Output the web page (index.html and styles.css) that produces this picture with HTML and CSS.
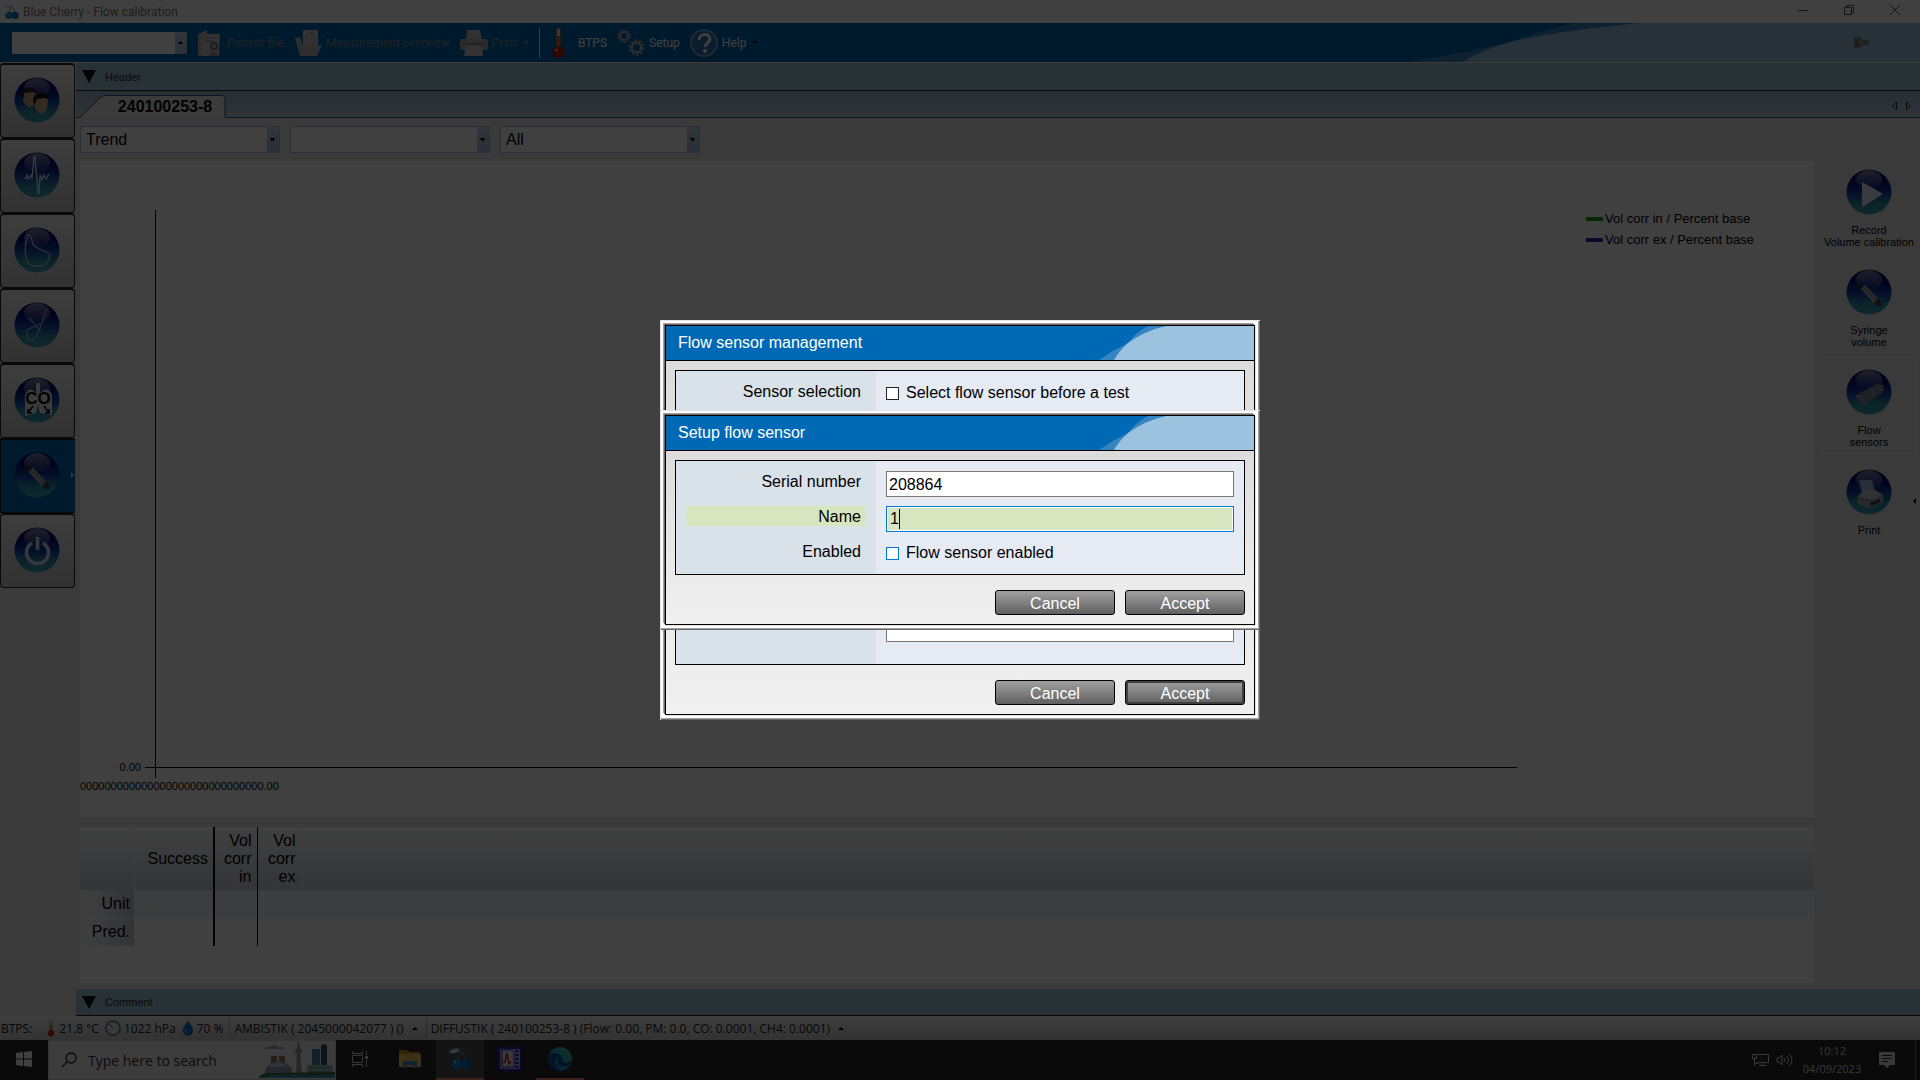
FILE: index.html
```html
<!DOCTYPE html>
<html lang="en">
<head>
    <meta charset="UTF-8">
    <meta name="viewport" content="width=device-width, initial-scale=1.0">
    <title>Blue Cherry - Flow calibration</title>
    <link rel="stylesheet" href="styles.css">
</head>
<body>

<!-- Shared shapes -->
<svg class="defs" aria-hidden="true">
    <defs>
        <linearGradient id="orbFill" x1="0" y1="0" x2="0" y2="1">
            <stop offset="0" stop-color="#000050"/>
            <stop offset="0.3" stop-color="#06107c"/>
            <stop offset="0.58" stop-color="#1850a8"/>
            <stop offset="0.75" stop-color="#2c8ca4"/>
            <stop offset="1" stop-color="#38a0b8"/>
        </linearGradient>
        <linearGradient id="orbShine" x1="0" y1="0" x2="0" y2="1">
            <stop offset="0" stop-color="#fff" stop-opacity="0.5"/>
            <stop offset="1" stop-color="#fff" stop-opacity="0.02"/>
        </linearGradient>
        <linearGradient id="edgeFill" x1="0" y1="1" x2="1" y2="0">
            <stop offset="0" stop-color="#0c59a4"/>
            <stop offset="0.5" stop-color="#1b9de2"/>
            <stop offset="1" stop-color="#5fd45a"/>
        </linearGradient>
        <symbol id="orb" viewBox="0 0 46 46">
            <circle cx="23" cy="23" r="22.5" fill="url(#orbFill)"/>
            <ellipse cx="23" cy="11" rx="13" ry="10" fill="url(#orbShine)"/>
        </symbol>
        <symbol id="syringe" viewBox="0 0 46 46">
            <path d="M11 14l5 1 3 3-4 4-3-3z" fill="#333"/>
            <path d="M15 20l4-4 14 15-4 4z" fill="#bbb"/>
            <path d="M17 19l13 14M18 18l13 13" stroke="#666" fill="none"/>
            <path d="M28 34l5-5 2 4 1 4-5 0z" fill="#444"/>
        </symbol>
        <symbol id="cherry" viewBox="0 0 24 24">
            <path d="M1 5C4 1 8 1 12 2 10 6 6 8 1 5z" fill="#cfe4f2"/>
            <path d="M11 3c2 3-1 7-3 11M11 3c4 2 6 6 7 11" fill="none" stroke="#5b7f99" stroke-width="1.3"/>
            <circle cx="9" cy="17" r="5.5" fill="#1283cf"/>
            <circle cx="18" cy="17" r="5.5" fill="#0a70bb"/>
            <circle cx="7" cy="15" r="1.2" fill="#a8d4f0"/>
        </symbol>
        <symbol id="thermo" viewBox="0 0 14 32">
            <path d="M5 3a2 2 0 0 1 4 0v18H5z" fill="#e9d5d0" stroke="#8a6a62"/>
            <path d="M7 9v14" stroke="#c02010" stroke-width="2"/>
            <circle cx="7" cy="25" r="6" fill="#c0180c"/>
            <circle cx="5" cy="23" r="1.5" fill="#f3a090"/>
        </symbol>
        <symbol id="gear" viewBox="0 0 20 20">
            <circle cx="10" cy="10" r="8" fill="none" stroke="#a8a8a8" stroke-width="3" stroke-dasharray="3 2"/>
            <circle cx="10" cy="10" r="5.5" fill="none" stroke="#b4b4b4" stroke-width="2.5"/>
        </symbol>
        <symbol id="swoosh" viewBox="0 0 160 34">
            <path d="M5 34Q19 24 34 17 42 6 54 0H160V34z" fill="#3585c0"/>
            <path d="M20 34Q25 25 34 17 50 5 72 0H160V34z" fill="#9bc2df"/>
        </symbol>
    </defs>
</svg>

<div class="window">
    <header class="titlebar">
        <svg class="title-icon"><use href="#cherry"/></svg>
        <span class="title-text">Blue Cherry - Flow calibration</span>
        <button type="button" class="win-btn" aria-label="Minimize"><svg viewBox="0 0 12 12"><path d="M1 6.500h10"/></svg></button>
        <button type="button" class="win-btn" aria-label="Restore"><svg viewBox="0 0 12 12"><path d="M1.500 3.500h7v7h-7zM3.500 3.500v-2h7v7h-2"/></svg></button>
        <button type="button" class="win-btn" aria-label="Close"><svg viewBox="0 0 12 12"><path d="M1 1l10 10M11 1L1 11"/></svg></button>
    </header>

    <div class="toolbar">
        <select class="combo combo-small" aria-label="Patient"><option></option></select>
        <button type="button" class="tool disabled">
            <svg class="tool-icon" viewBox="0 0 28 28">
                <path d="M3 5l9-4v24l-9 2z" fill="#b4b4b4"/>
                <path d="M6 5h19l-1 22H6z" fill="#c8c8c8"/>
                <path d="M9 9h9M9 12h8" stroke="#888"/>
                <circle cx="19" cy="17" r="3" fill="none" stroke="#777" stroke-width="2"/>
                <path d="M14 27c0-6 9-6 9 0z" fill="#999"/>
            </svg>
            Patient file
        </button>
        <button type="button" class="tool disabled">
            <svg class="tool-icon" viewBox="0 0 28 28">
                <path d="M9 1h15v20H9z" fill="#ccc"/>
                <path d="M13 13c-1-5 2-7 4-10 1 4 6 7 3 11-2 2-5 1-7-1z" fill="none" stroke="#999"/>
                <path d="M1 9l5-1 3 9 19-1-5 11H6z" fill="#b4b4b4"/>
            </svg>
            Measurement overview
        </button>
        <button type="button" class="tool disabled">
            <svg class="tool-icon" viewBox="0 0 28 28">
                <path d="M7 1h13l2 10H6z" fill="#c4c4c4"/>
                <rect x="0" y="10" width="28" height="11" rx="2" fill="#acacac"/>
                <path d="M3 15h22" stroke="#777"/>
                <path d="M6 17h16l1 10H4z" fill="#ccc"/>
            </svg>
            Print
            <span class="caret"></span>
        </button>
        <span class="tool-sep"></span>
        <button type="button" class="tool tool-btps">
            <svg class="thermo-icon"><use href="#thermo"/></svg>
            BTPS
        </button>
        <button type="button" class="tool">
            <svg class="tool-icon" viewBox="0 0 28 28">
                <use href="#gear" x="0" y="0" width="14" height="14"/>
                <use href="#gear" x="11" y="10" width="17" height="17"/>
            </svg>
            Setup
        </button>
        <button type="button" class="tool">
            <svg class="tool-icon" viewBox="0 0 28 28">
                <circle cx="14" cy="14" r="13" fill="#2c72b4" stroke="#7ca4c8" stroke-width="2"/>
                <path d="M9 11c0-7 11-7 11-1 0 4-5 4-5 8" fill="none" stroke="#fff" stroke-width="3"/>
                <circle cx="15" cy="22" r="2" fill="#fff"/>
            </svg>
            Help
            <span class="caret dark"></span>
        </button>
        <span class="toolbar-art">
            <svg viewBox="0 0 520 39" preserveAspectRatio="none">
                <path d="M10 39Q75 28 110 19 150 5 175 0H520V39z" fill="#3585c0"/>
                <path d="M62 39Q80 28 110 19 150 9 240 0H520V39z" fill="#9bc2df"/>
            </svg>
            <svg class="key-icon" viewBox="0 0 16 12">
                <path d="M1 1h5l2 3h6v3H8l-2 3H1z" fill="#a8a09c" stroke="#554"/>
                <path d="M3 3v5h2V6" fill="none" stroke="#443"/>
            </svg>
        </span>
    </div>

    <div class="main">
        <nav class="sidebar">
            <button type="button" class="side-btn" aria-label="Patients">
                <svg viewBox="0 0 46 46">
                    <use href="#orb"/>
                    <path d="M9 20c0-12 14-11 13 0-1 5-2 10-6 10s-7-4-7-10z" fill="#c8a088"/>
                    <path d="M7 18c0-9 15-11 16-1l-4-2-9 1v5z" fill="#2c2420"/>
                    <path d="M20 25c0-12 14-11 14 0-1 6-2 12-6 12s-8-6-8-12z" fill="#d0a890"/>
                    <path d="M19 25c-1-12 16-12 16-2l-4-2-8 1-2 5z" fill="#181414"/>
                </svg>
            </button>
            <button type="button" class="side-btn" aria-label="Pulse">
                <svg viewBox="0 0 46 46">
                    <use href="#orb"/>
                    <path d="M11 27l2-4 1 4 3-4 1 4 2-22h1l3 36h1l1-18 2 5 2-5 2 4 3-5" fill="none" stroke="#dce8f4" stroke-width="1.300"/>
                </svg>
            </button>
            <button type="button" class="side-btn" aria-label="Flow volume loop">
                <svg viewBox="0 0 46 46">
                    <use href="#orb"/>
                    <path d="M14 8c-3 7-3 16-2 22 1 7 4 9 9 9h7c4 0 8-8 8-12-6-4-16-6-17-10-1-3-2-10-5-9z" fill="none" stroke="#b8c8dc" stroke-width="1.300"/>
                </svg>
            </button>
            <button type="button" class="side-btn" aria-label="Diffusion">
                <svg viewBox="0 0 46 46">
                    <use href="#orb"/>
                    <path d="M33 7L26 26c-2 5-6 13-10 13-4 0-3-6-3-11l13-6M15 16l12 13" fill="none" stroke="#9cb0cc" stroke-width="1.300"/>
                </svg>
            </button>
            <button type="button" class="side-btn" aria-label="CO diffusion">
                <svg viewBox="0 0 46 46">
                    <use href="#orb"/>
                    <path d="M22 6h4v10q8-8 12 2v20l-12-2-2-8-2 8-11 3V18q4-10 11-2z" fill="#e8e8e8"/>
                    <text x="24" y="27" text-anchor="middle" class="co-text">CO</text>
                    <path d="M19 29l-5 7M14 32v4h4M30 29l5 7M31 36h4v-4" fill="none" stroke="#000" stroke-width="1.500"/>
                </svg>
            </button>
            <button type="button" class="side-btn active" aria-label="Calibration">
                <svg viewBox="0 0 46 46"><use href="#orb"/><use href="#syringe"/></svg>
                <span class="side-arrow"></span>
            </button>
            <button type="button" class="side-btn" aria-label="Exit">
                <svg viewBox="0 0 46 46">
                    <use href="#orb"/>
                    <path d="M18 16a11 11 0 1 0 11 0M23.500 10v13" fill="none" stroke="#d8e4f0" stroke-width="3.500"/>
                </svg>
            </button>
        </nav>

        <div class="content">
            <button type="button" class="fold-bar"><span class="fold-mark"></span>Header</button>
            <div class="tabs">
                <button type="button" class="tab">
                    <svg viewBox="0 0 150 24" preserveAspectRatio="none"><path d="M0 23.500H4L25 3Q27 1.500 30 1.500H146Q149 1.500 149 4V24H0z" fill="#ececec"/><path d="M0 23.500H4L25 3Q27 1.500 30 1.500H146Q149 1.500 149 4V23" fill="none" stroke="#34588c"/></svg>
                    <span>240100253-8</span>
                </button>
                <svg class="tab-scroll" viewBox="0 0 20 10"><path d="M5.500 1v8l-4-4zM15.500 1v8l4-4z" fill="none" stroke="#222"/></svg>
            </div>

            <div class="work">
                <div class="work-main">
                    <div class="filters">
                        <select class="combo" aria-label="View"><option>Trend</option></select>
                        <select class="combo" aria-label="Parameter"><option></option></select>
                        <select class="combo" aria-label="Range"><option>All</option></select>
                    </div>

                    <!-- Trend chart -->
                    <section class="chart">
                        <div class="y-label">0.00</div>
                        <svg class="plot">
                            <line x1="0" y1="0" x2="0" y2="100%"/>
                            <line x1="-10" y1="100%" x2="100%" y2="100%"/>
                            <svg y="100%" overflow="visible"><line x1="0" y1="0" x2="0" y2="11"/></svg>
                        </svg>
                        <ul class="legend">
                            <li><span class="key green"></span>Vol corr in / Percent base</li>
                            <li><span class="key blue"></span>Vol corr ex / Percent base</li>
                        </ul>
                        <div class="x-label">000000000000000000000000000000.00</div>
                    </section>

                    <!-- Results -->
                    <section class="results">
                        <table>
                            <thead>
                                <tr><th class="c-name"></th><th class="c-success">Success</th><th class="c-in">Vol corr in</th><th class="c-ex">Vol corr ex</th><th></th></tr>
                            </thead>
                            <tbody>
                                <tr class="unit"><th>Unit</th><td class="c-success"></td><td class="c-in"></td><td></td><td></td></tr>
                                <tr><th>Pred.</th><td class="c-success"></td><td class="c-in"></td><td></td><td></td></tr>
                            </tbody>
                        </table>
                    </section>
                </div>

                <aside class="actions">
                    <button type="button" class="action">
                        <svg viewBox="0 0 46 46"><use href="#orb"/><path d="M16 13l21 12-21 13z" fill="#e4ecf4"/></svg>
                        Record<br>Volume calibration
                    </button>
                    <button type="button" class="action">
                        <svg viewBox="0 0 46 46"><use href="#orb"/><use href="#syringe"/></svg>
                        Syringe<br>volume
                    </button>
                    <button type="button" class="action selected">
                        <svg viewBox="0 0 46 46">
                            <use href="#orb"/>
                            <path d="M10 27l6-4 12-6c2-3 6-2 8-1 3 3 2 6 0 8l-9 6-8 6c-5-1-8-5-9-9z" fill="#78828e"/>
                            <path d="M10 27c3-1 8 3 9 9M24 20c3 1 5 5 4 9" fill="none" stroke="#98a0ac" stroke-width="1.500"/>
                        </svg>
                        Flow<br>sensors
                    </button>
                    <button type="button" class="action">
                        <svg viewBox="0 0 46 46">
                            <use href="#orb"/>
                            <path d="M13 11l13 0 3 12-13 2z" fill="#9cb8d8"/>
                            <path d="M11 28l8-7 10 0 8 5-11 5z" fill="#c8c8c8"/>
                            <path d="M11 28l14 4 12-6v7l-14 6-12-4z" fill="#a0a0a0"/>
                            <path d="M24 34l10-4v3l-9 4z" fill="#333"/>
                        </svg>
                        Print
                        <span class="action-arrow"></span>
                    </button>
                </aside>
            </div>

            <button type="button" class="fold-bar comment"><span class="fold-mark"></span>Comment</button>
        </div>
    </div>

    <footer class="status">
        <span class="st-name">BTPS:</span>
        <span class="st-item"><svg class="st-thermo"><use href="#thermo"/></svg>21.8 °C</span>
        <span class="st-item">
            <svg class="st-gauge" viewBox="0 0 16 16"><circle cx="8" cy="8" r="7" fill="#d8ecec" stroke="#607070" stroke-width="1.500"/><path d="M8 8L4 4" stroke="#333"/></svg>1022 hPa
        </span>
        <span class="st-item"><svg class="st-drop" viewBox="0 0 12 16"><path d="M6 0c1 4 6 7 5 11a5 5 0 0 1-10 0C0 7 5 4 6 0z" fill="#1474c8"/><path d="M4 9c-1 2 0 4 1 4" stroke="#8cd0f4" fill="none"/></svg>70 %</span>
        <span class="st-device">AMBISTIK ( 2045000042077 ) ()<span class="up"></span></span>
        <span class="st-device">DIFFUSTIK ( 240100253-8 ) (Flow: 0.00, PM: 0.0, CO: 0.0001, CH4: 0.0001)<span class="up"></span></span>
    </footer>
</div>

<div class="taskbar">
    <button type="button" class="task start" aria-label="Start">
        <svg width="16" height="16" viewBox="0 0 16 16"><path d="M0 2l7-1v6.500H0zM8 1l8-1v7.500H8zM0 8.500h7V15l-7-1zM8 8.500h8V16l-8-1z" fill="#fff"/></svg>
    </button>
    <label class="search">
        <svg width="16" height="16" viewBox="0 0 16 16"><circle cx="10" cy="6" r="5" fill="none" stroke="#222" stroke-width="1.300"/><path d="M6 10l-5 5" stroke="#222" stroke-width="1.300"/></svg>
        <input type="text" placeholder="Type here to search" aria-label="Search">
        <svg class="city" viewBox="0 0 77 36">
            <path d="M6 7q2-4 6-2 4-4 8 0 5-1 6 2z" fill="#8cb0c8"/>
            <path d="M13 14h6v16h-6zM21 14h6v16h-6z" fill="#a07860"/>
            <path d="M7 27q13-16 27 0v6H7z" fill="#8898b4"/>
            <path d="M10 25q10-10 20 0z" fill="#c0d0e0"/>
            <path d="M40 0h1l1 6 3 3-3 3 2 21h-6l1-21-3-3 3-3z" fill="#a09490"/>
            <path d="M54 7h8v22h-8z" fill="#4878a0"/>
            <path d="M63 3q5-2 6 1v26h-6z" fill="#284c78"/>
            <path d="M49 23h26v10H49z" fill="#98c0b4"/>
            <path d="M51 26h4m2 0h4m2 0h4m2 0h4M51 30h22" stroke="#486c68"/>
            <path d="M0 36q5-6 14-5l63-1v6z" fill="#3c6c38"/>
            <path d="M0 36q10-4 24-3h53v3z" fill="#3090b8"/>
        </svg>
    </label>
    <button type="button" class="task" aria-label="Task view">
        <svg width="18" height="16" viewBox="0 0 18 16"><path d="M1.500 4.500h10v7h-10zM1.500 0v2.500h10V0M1.500 16v-2.500h10V16M15.500 0v4M15.500 9v7" fill="none" stroke="#ddd"/><path d="M14 5h3v3h-3z" fill="#ddd"/></svg>
    </button>
    <button type="button" class="task" aria-label="File Explorer">
        <svg width="22" height="20" viewBox="0 0 22 20"><path d="M0 1h8l2 2h11v15H0z" fill="#c8901c"/><path d="M0 5h22v13H0z" fill="#f0c454"/><path d="M4 19v-7h14v7h-4v-3H8v3z" fill="#3c8cc8"/></svg>
    </button>
    <button type="button" class="task open current" aria-label="Blue Cherry"><svg width="24" height="24"><use href="#cherry"/></svg></button>
    <button type="button" class="task" aria-label="Spirometry">
        <svg width="24" height="24" viewBox="0 0 24 24"><path d="M1 1h22v22H1z" fill="#a4a4dc" stroke="#2020b0" stroke-width="2"/><path d="M4 3h9l3 3v14H4z" fill="#e8e8f4" stroke="#3030a0"/><path d="M5 16l2-1 2-9 2 11 2-3" fill="none" stroke="#c02020" stroke-width="1.500"/><path d="M19 3v18" stroke="#2020b0" stroke-width="3" stroke-dasharray="2 2"/></svg>
    </button>
    <button type="button" class="task open" aria-label="Edge">
        <svg width="24" height="24" viewBox="0 0 24 24"><circle cx="12" cy="12" r="12" fill="url(#edgeFill)"/><path d="M1 9C5 4 14 6 14 12c-1 2-1 4 3 4 3 0 5-1 7-3-1 3-2 5-4 6-7 2-12-3-10-9-5 3-4 10 2 14C4 24-1 16 1 9z" fill="#0c4c94"/><path d="M14 12c0 3 2 4 5 4l4-2c-2 3-12 4-9-2z" fill="#282828"/></svg>
    </button>
    <div class="tray">
        <svg width="17" height="14" viewBox="0 0 17 14"><path d="M5.500 1.500h11v8h-11M10.500 10v3M7 12.500h7M.5 1.500h4v4h-4zM2.500 6v7M2.500 10.500H6" fill="none" stroke="#ddd"/></svg>
        <svg width="17" height="14" viewBox="0 0 17 14"><path d="M1 5h2l3-3v10L3 9H1zM8 5q2 2 0 4M10.500 3q4 4 0 8M13 1q6 6 0 12" fill="none" stroke="#ddd"/></svg>
        <div class="clock">10:12<br>04/09/2023</div>
        <svg class="note" width="16" height="16" viewBox="0 0 16 16"><path d="M0 0h16v13h-5l-3 3-3-3H0z" fill="#ddd"/><path d="M3 3.500h10M3 6.500h10M3 9.500h6" stroke="#282828"/></svg>
    </div>
</div>

<!-- Modal dialogs -->
<div class="overlay">
    <div class="dialog" role="dialog" aria-label="Flow sensor management">
        <form class="dialog-inner">
            <h2>Flow sensor management<svg><use href="#swoosh"/></svg></h2>
            <div class="dialog-body">
                <div class="group group-tall">
                    <div class="row">
                        <span class="row-label">Sensor selection</span>
                        <label class="check"><input type="checkbox">Select flow sensor before a test</label>
                    </div>
                    <div class="row row-list">
                        <span class="row-label"></span>
                        <select class="list" size="8" aria-label="Flow sensors"></select>
                    </div>
                </div>
                <div class="dialog-buttons">
                    <button type="button" class="btn">Cancel</button>
                    <button type="button" class="btn default">Accept</button>
                </div>
            </div>
        </form>
    </div>

    <div class="dialog" role="dialog" aria-label="Setup flow sensor">
        <form class="dialog-inner">
            <h2>Setup flow sensor<svg><use href="#swoosh"/></svg></h2>
            <div class="dialog-body">
                <div class="group">
                    <div class="row">
                        <label class="row-label" for="serial">Serial number</label>
                        <input type="text" class="field" id="serial" value="208864">
                    </div>
                    <div class="row">
                        <label class="row-label focused" for="name">Name</label>
                        <div class="field field-focused"><input type="text" id="name" value="1" size="1"><span class="cursor"></span></div>
                    </div>
                    <div class="row">
                        <span class="row-label">Enabled</span>
                        <label class="check hot"><input type="checkbox">Flow sensor enabled</label>
                    </div>
                </div>
                <div class="dialog-buttons">
                    <button type="button" class="btn">Cancel</button>
                    <button type="button" class="btn">Accept</button>
                </div>
            </div>
        </form>
    </div>
</div>

</body>
</html>
```

FILE: styles.css
```css
* {
    box-sizing: border-box;
}

body {
    margin: 0;
    min-height: 100vh;
    display: flex;
    flex-direction: column;
    font-family: "Liberation Sans", Arial, sans-serif;
    font-size: 16px;
    color: #000;
    background: #e8e8e8;
}

button, input, select {
    font-family: inherit;
    font-size: inherit;
    color: inherit;
}

button {
    padding: 0;
    border: none;
    background: none;
}

svg {
    flex: none;
}

.defs {
    position: absolute;
    width: 0;
    height: 0;
}

.window {
    flex: 1;
    display: flex;
    flex-direction: column;
}

/* Title bar */
.titlebar {
    display: flex;
    align-items: center;
    height: 23px;
    padding: 0 2px 0 3px;
    background: #fff;
    font-family: Roboto, sans-serif;
    font-size: 12px;
    color: #777;
}

.title-icon {
    width: 16px;
    height: 16px;
    margin-right: 4px;
}

.title-text {
    flex: 1;
}

.win-btn {
    width: 46px;
    height: 20px;
}

.win-btn svg {
    width: 12px;
    height: 12px;
    fill: none;
    stroke: #555;
}

/* Toolbar */
.toolbar {
    display: flex;
    align-items: center;
    height: 40px;
    padding-left: 12px;
    background: #0069b5;
    border-bottom: 1px solid #eee;
    font-family: Roboto, sans-serif;
    font-size: 12px;
    color: #fff;
}

.combo {
    appearance: none;
    width: 200px;
    height: 27px;
    padding: 0 18px 0 5px;
    border: 1px solid #a8c0e4;
    border-radius: 0;
    color: #000;
    background:
        linear-gradient(#111, #111) right 6px center / 1px 3px no-repeat,
        linear-gradient(#111, #111) right 5px center / 3px 2px no-repeat,
        linear-gradient(#111, #111) right 4px top 11px / 5px 1px no-repeat,
        linear-gradient(#c4d6f0, #a8bcdc) right / 12px 100% no-repeat,
        #fff;
}

.combo-small {
    width: 175px;
    height: 22px;
    border: none;
    margin-right: 8px;
}

.tool {
    display: flex;
    align-items: center;
    gap: 4px;
    margin-right: 10px;
    white-space: nowrap;
}

.tool.disabled {
    color: #7f8890;
}

.tool-icon {
    width: 28px;
    height: 28px;
}

.tool-btps {
    gap: 12px;
}

.thermo-icon {
    width: 15px;
    height: 32px;
}

.caret {
    margin-left: 2px;
    border: 3px solid transparent;
    border-top-color: #7f8890;
    border-bottom: none;
}

.caret.dark {
    border-top-color: #111;
}

.tool-sep {
    width: 1px;
    height: 31px;
    margin-right: 11px;
    background: #eee;
}

.toolbar-art {
    flex: 0 0 520px;
    position: relative;
    height: 39px;
    margin-left: auto;
}

.toolbar-art svg {
    display: block;
    width: 100%;
    height: 100%;
}

.toolbar-art .key-icon {
    position: absolute;
    right: 50px;
    top: 14px;
    width: 16px;
    height: 12px;
}

/* Left navigation */
.main {
    flex: 1;
    display: flex;
}

.sidebar {
    width: 76px;
    background: #e8e8e8;
}

.side-btn {
    display: flex;
    align-items: center;
    justify-content: center;
    position: relative;
    width: 75px;
    height: 75px;
    padding: 0 2px 2px 0;
    border: 1px solid #222;
    border-top-width: 2px;
    border-radius: 4px;
    background: linear-gradient(#f4f4f4, #c4c4c4);
}

.side-btn svg {
    width: 46px;
    height: 46px;
}

.side-btn.active {
    border-right: none;
    border-radius: 0;
    background: #0069b5;
}

.side-arrow {
    position: absolute;
    right: 1px;
    border: 3px solid transparent;
    border-left-color: #ddd;
    border-right: none;
}

.co-text {
    font: bold 17px "Liberation Sans", Arial, sans-serif;
}

/* Content */
.content {
    flex: 1;
    min-width: 0;
    display: flex;
    flex-direction: column;
}

.fold-bar {
    display: flex;
    align-items: center;
    gap: 9px;
    height: 28px;
    padding-left: 6px;
    border-bottom: 1px solid #222;
    background: #9bc4d8;
    font-size: 11px;
    color: #333;
}

.fold-bar.comment {
    border-top: 1px solid #eee;
    margin-top: 5px;
}

.fold-mark {
    border: 7px solid transparent;
    border-top: 13px solid #111;
    border-bottom: none;
}

.tabs {
    display: flex;
    align-items: center;
    justify-content: space-between;
    height: 27px;
    padding: 3px 9px 0 0;
    background: linear-gradient(#9cb8d0, #bccde0);
    box-shadow: inset 0 -1px #34588c;
}

.tab {
    position: relative;
    width: 150px;
    height: 24px;
    padding: 2px 0 0 28px;
    font-weight: bold;
}

.tab svg {
    position: absolute;
    inset: 0;
    width: 150px;
    height: 24px;
}

.tab span {
    position: relative;
}

.tab-scroll {
    width: 20px;
    height: 10px;
}

.work {
    flex: 1;
    display: flex;
}

.work-main {
    flex: 1;
    min-width: 0;
    display: flex;
    flex-direction: column;
    padding-left: 4px;
}

.filters {
    display: flex;
    gap: 10px;
    padding: 8px 0;
}

/* Chart */
.chart {
    flex: 1;
    display: grid;
    grid-template-columns: 75px 1fr 229px;
    grid-template-rows: 1fr 50px;
    padding-top: 49px;
    background: #fff;
    font-size: 13px;
}

.y-label {
    align-self: end;
    justify-self: end;
    margin: 0 14px -6px 0;
    font-size: 11px;
    line-height: 12px;
}

.plot {
    width: calc(100% - 69px);
    height: 100%;
    overflow: visible;
    stroke: #000;
    stroke-width: 1;
    shape-rendering: crispEdges;
}

.legend {
    list-style: none;
    margin: -2px 0 0;
    padding: 0;
    line-height: 21px;
}

.legend li {
    display: flex;
    align-items: center;
    gap: 2px;
    white-space: nowrap;
}

.key {
    width: 17px;
    height: 4px;
}

.key.green {
    background: #18a018;
}

.key.blue {
    background: #2018b0;
}

.x-label {
    grid-column: 1 / 3;
    padding-top: 13px;
    font-size: 11px;
    line-height: 13px;
}

/* Results table */
.results {
    height: 156px;
    margin-top: 10px;
    background: #fff;
}

.results table {
    width: 100%;
    table-layout: fixed;
    border-collapse: collapse;
    line-height: 18px;
}

.results th, .results td {
    padding: 0 5px;
    font-weight: normal;
    text-align: right;
}

.results thead th {
    height: 63px;
    border-right: 1px solid #f0f0f4;
}

.results thead tr {
    background: linear-gradient(#fff, #c8d0d8);
}

.results tbody th, .results tbody td {
    height: 28px;
}

.results tbody th {
    padding-right: 4px;
    background: linear-gradient(to right, #fff, #c4ccd8);
}

.results .unit {
    background: #eef2f8;
    border-bottom: 1px solid #fff;
}

.results .c-name {
    width: 54px;
}

.results .c-success {
    width: 80px;
    border-right: 2px solid #000;
}

.results .c-in {
    width: 43px;
    border-right: 1px solid #000;
}

.results .c-ex {
    width: 44px;
}

/* Right hand actions */
.actions {
    width: 105px;
    padding: 39px 3px 0 6px;
}

.action {
    position: relative;
    display: flex;
    flex-direction: column;
    align-items: center;
    width: 96px;
    height: 97px;
    margin-bottom: 3px;
    padding-top: 11px;
    border: 1px solid transparent;
    font-size: 11px;
    line-height: 12px;
    white-space: nowrap;
}

.action svg {
    width: 46px;
    height: 46px;
    margin-bottom: 9px;
}

.action.selected {
    border-color: #f4f4f4;
}

.action-arrow {
    position: absolute;
    right: 0;
    top: 40px;
    border: 3px solid transparent;
    border-right-color: #000;
    border-left: none;
}

/* Status bar */
.status {
    display: flex;
    align-items: center;
    height: 24px;
    padding-left: 1px;
    background: linear-gradient(#f4f4f4, #c8c8c8);
    font-family: "Open Sans", sans-serif;
    font-size: 12px;
    color: #222;
}

.st-name {
    margin-right: 14px;
}

.st-item {
    display: flex;
    align-items: center;
    gap: 3px;
    margin-right: 6px;
}

.st-thermo {
    width: 10px;
    height: 17px;
}

.st-gauge {
    width: 16px;
    height: 16px;
}

.st-drop {
    width: 12px;
    height: 16px;
}

.st-device {
    display: flex;
    align-items: center;
    height: 20px;
    padding: 0 8px 0 4px;
    border-left: 1px solid #aaa;
    white-space: nowrap;
}

.up {
    margin-left: 8px;
    border: 3px solid transparent;
    border-bottom-color: #000;
    border-top: none;
}

/* Taskbar */
.taskbar {
    display: flex;
    height: 40px;
    background: #282828;
    font-family: "Open Sans", sans-serif;
}

.task {
    display: flex;
    align-items: center;
    justify-content: center;
    width: 48px;
    margin-right: 2px;
    border-bottom: 2px solid transparent;
}

.task.start {
    margin-right: 0;
}

.task.open {
    border-bottom-color: #f08a7a;
}

.task.current {
    background: #505050;
}

.search {
    display: flex;
    align-items: center;
    width: 288px;
    padding-left: 12px;
    border: 1px solid #ccc;
    background: #f0f0f0;
}

.search input {
    flex: 1;
    min-width: 0;
    padding: 0 0 0 11px;
    border: none;
    background: none;
    font-size: 14px;
}

.search input::placeholder {
    color: #333;
    opacity: 1;
}

.city {
    width: 77px;
    height: 38px;
}

.tray {
    display: flex;
    align-items: center;
    gap: 7px;
    margin-left: auto;
    margin-right: 4px;
    padding-right: 20px;
    border-right: 1px solid #777;
    color: #ddd;
    font-size: 11px;
    line-height: 18px;
    text-align: center;
}

.clock {
    width: 64px;
}

.note {
    margin-left: 8px;
}

/* Modal dialogs */
.overlay {
    position: fixed;
    inset: 0;
    display: grid;
    place-items: center;
    padding-bottom: 40px;
    background: rgba(0, 0, 0, 0.75);
}

.dialog {
    grid-area: 1 / 1;
    width: 600px;
    padding: 5px;
    background: #fff;
    box-shadow: inset 1px 1px #e3e3e3, inset -1px -1px #696969, inset -2px -2px #a0a0a0;
}

.dialog-inner {
    border: 1px solid #000;
    box-shadow: -1px -1px #696969, -2px -2px #a0a0a0, 1px 1px #e3e3e3;
}

.dialog h2 {
    display: flex;
    align-items: center;
    justify-content: space-between;
    height: 35px;
    margin: 0;
    padding-left: 12px;
    border-bottom: 1px solid #000;
    background: #0069b5;
    color: #fff;
    font-size: 16px;
    font-weight: normal;
}

.dialog h2 svg {
    width: 160px;
    height: 34px;
}

.dialog-body {
    padding: 9px;
    background: linear-gradient(#dcdcdc, #f0f0f0);
}

.group {
    display: flex;
    flex-direction: column;
    gap: 9px;
    padding: 10px 10px 7px;
    border: 1px solid #000;
    background: linear-gradient(to right, #d9e1e9 200px, #e5eaf3 200px);
}

.group-tall {
    padding-bottom: 22px;
}

.row {
    display: grid;
    grid-template-columns: 180px 1fr;
    column-gap: 20px;
    height: 26px;
}

.row-list {
    height: 226px;
}

.row-label {
    height: 20px;
    padding-right: 5px;
    line-height: 22px;
    text-align: right;
}

.row-label.focused {
    background: #d7e6bf;
}

.field, .list {
    width: 100%;
    border: 1px solid #7a7a7a;
    border-radius: 0;
    background: #fff;
}

.field {
    height: 26px;
    padding: 2px 2px 0;
}

.field-focused {
    display: flex;
    align-items: center;
    padding: 0 3px;
    border-color: #0078d7;
    background: #d7e6bf;
    box-shadow: inset 0 0 0 1px #fff;
}

.field-focused input {
    width: 9px;
    padding: 0;
    border: none;
    outline: none;
    background: none;
}

.cursor {
    width: 1px;
    height: 20px;
    background: #000;
}

.check {
    display: flex;
    align-items: center;
    gap: 7px;
    height: 24px;
}

.check input {
    appearance: none;
    width: 13px;
    height: 13px;
    margin: 0;
    border: 1px solid #222;
    background: #fff;
}

.check.hot input {
    border-color: #0078d7;
}

.dialog-buttons {
    display: flex;
    justify-content: flex-end;
    gap: 10px;
    margin-top: 15px;
}

.btn {
    width: 120px;
    height: 25px;
    padding-top: 2px;
    border: 1px solid #000;
    border-radius: 3px;
    background: linear-gradient(#a0a0a0, #606060);
    color: #fff;
}

.btn.default {
    box-shadow: inset 0 0 0 2px #404040;
}
```
